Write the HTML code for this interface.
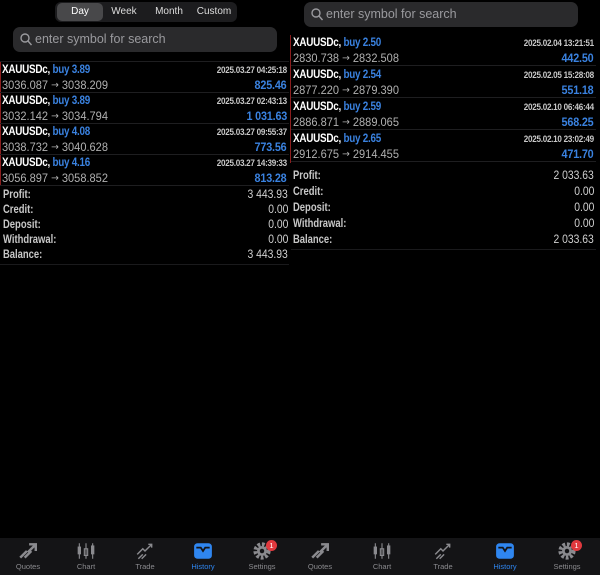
<!DOCTYPE html>
<html><head><meta charset="utf-8"><style>
*{margin:0;padding:0;box-sizing:border-box}
body{width:600px;height:575px;background:#000;position:relative;overflow:hidden;font-family:"Liberation Sans",sans-serif;color:#fff}
.a{position:absolute}
.seg{left:55px;top:2px;width:182px;height:20px;background:#1c1c1e;border-radius:6px}
.seg div{position:absolute;top:0;height:20px;line-height:20px;font-size:10px;color:#ddd;text-align:center}
.search{background:#2a2a2c;border-radius:7px;height:25px;color:#9a9a9e;font-size:12.5px;line-height:25px;padding-left:22px}
.search svg{position:absolute;left:7px;top:6px}
.row{position:absolute;height:31px;border-bottom:1px solid #1e1e20}
.l1{position:absolute;left:2px;top:2px;font-size:11.5px;font-weight:bold;letter-spacing:-0.3px;transform:scaleX(.86);transform-origin:left;white-space:nowrap}
.l1 b{color:#3a82e0}
.l2{position:absolute;left:2px;top:16px;font-size:12px;color:#b0b0b0;transform:scaleX(.92);transform-origin:left;white-space:nowrap}
.l2 u{text-decoration:none;font-family:"DejaVu Sans",sans-serif;font-size:10px;position:relative;top:-1px}
.dt{position:absolute;right:2px;top:3px;font-size:9px;font-weight:bold;color:#c8c8c8;letter-spacing:-0.3px;transform:scaleX(.9);transform-origin:right;white-space:nowrap}
.pr{position:absolute;right:2px;top:16px;font-size:12px;font-weight:bold;color:#3a82e0;letter-spacing:-0.2px;transform:scaleX(.9);transform-origin:right}
.sm{position:absolute;font-size:11.5px;color:#c8c8c8;height:15px;line-height:15px}
.sm span{position:absolute;left:0;font-weight:bold;transform:scaleX(.82);transform-origin:left}
.sm i{position:absolute;right:0;font-style:normal;color:#d0d0d0;transform:scaleX(.9);transform-origin:right}
.tab{position:absolute;top:538px;height:37px;background:#141416}
.t{position:absolute;top:0;width:50px;text-align:center;font-size:7.5px;color:#8a8a8e}
.t svg{display:block;margin:4px auto 2px}
.t.on{color:#2f86f0}
.badge{position:absolute;top:2px;left:29px;width:11px;height:11px;border-radius:6px;background:#e0393e;color:#fff;font-size:7.5px;line-height:11px;text-align:center}
</style></head><body>
<div class="a seg"><div style="left:2px;width:46px;top:1px;height:18px;line-height:18px;background:#48484a;border-radius:5px;color:#fff">Day</div><div style="left:48px;width:42px">Week</div><div style="left:92px;width:44px">Month</div><div style="left:137px;width:44px">Custom</div></div>
<div class="a search" style="left:13px;top:27px;width:264px"><svg width="12" height="13" viewBox="0 0 12 13"><circle cx="5" cy="5" r="4" stroke="#9a9a9e" stroke-width="1.4" fill="none"/><path d="M8 8l3.5 4" stroke="#9a9a9e" stroke-width="1.4"/></svg>enter symbol for search</div>
<div class="a" style="left:0;top:61px;width:289px;border-top:1px solid #1e1e20"></div>
<div class="a" style="left:0;top:62px;width:1px;height:124px;background:#8b1d1d"></div>
<div class="row" style="left:0;top:62px;width:289px"><div class="l1">XAUUSDc, <b>buy 3.89</b></div><div class="dt">2025.03.27 04:25:18</div><div class="l2">3036.087 <u>→</u> 3038.209</div><div class="pr">825.46</div></div>
<div class="row" style="left:0;top:93px;width:289px"><div class="l1">XAUUSDc, <b>buy 3.89</b></div><div class="dt">2025.03.27 02:43:13</div><div class="l2">3032.142 <u>→</u> 3034.794</div><div class="pr">1 031.63</div></div>
<div class="row" style="left:0;top:124px;width:289px"><div class="l1">XAUUSDc, <b>buy 4.08</b></div><div class="dt">2025.03.27 09:55:37</div><div class="l2">3038.732 <u>→</u> 3040.628</div><div class="pr">773.56</div></div>
<div class="row" style="left:0;top:155px;width:289px"><div class="l1">XAUUSDc, <b>buy 4.16</b></div><div class="dt">2025.03.27 14:39:33</div><div class="l2">3056.897 <u>→</u> 3058.852</div><div class="pr">813.28</div></div>
<div class="sm" style="left:3px;top:188px;width:285px"><span>Profit:</span><i>3 443.93</i></div>
<div class="sm" style="left:3px;top:203px;width:285px"><span>Credit:</span><i>0.00</i></div>
<div class="sm" style="left:3px;top:218px;width:285px"><span>Deposit:</span><i>0.00</i></div>
<div class="sm" style="left:3px;top:233px;width:285px"><span>Withdrawal:</span><i>0.00</i></div>
<div class="sm" style="left:3px;top:248px;width:285px"><span>Balance:</span><i>3 443.93</i></div>
<div class="a" style="left:0;top:264px;width:289px;border-top:1px solid #1a1a1c"></div>
<div class="a search" style="left:304px;top:2px;width:274px"><svg width="12" height="13" viewBox="0 0 12 13"><circle cx="5" cy="5" r="4" stroke="#9a9a9e" stroke-width="1.4" fill="none"/><path d="M8 8l3.5 4" stroke="#9a9a9e" stroke-width="1.4"/></svg>enter symbol for search</div>
<div class="a" style="left:290px;top:35px;width:1px;height:128px;background:#8b1d1d"></div>
<div class="row" style="left:291px;top:35px;width:305px"><div class="l1">XAUUSDc, <b>buy 2.50</b></div><div class="dt">2025.02.04 13:21:51</div><div class="l2">2830.738 <u>→</u> 2832.508</div><div class="pr">442.50</div></div>
<div class="row" style="left:291px;top:67px;width:305px"><div class="l1">XAUUSDc, <b>buy 2.54</b></div><div class="dt">2025.02.05 15:28:08</div><div class="l2">2877.220 <u>→</u> 2879.390</div><div class="pr">551.18</div></div>
<div class="row" style="left:291px;top:99px;width:305px"><div class="l1">XAUUSDc, <b>buy 2.59</b></div><div class="dt">2025.02.10 06:46:44</div><div class="l2">2886.871 <u>→</u> 2889.065</div><div class="pr">568.25</div></div>
<div class="row" style="left:291px;top:131px;width:305px"><div class="l1">XAUUSDc, <b>buy 2.65</b></div><div class="dt">2025.02.10 23:02:49</div><div class="l2">2912.675 <u>→</u> 2914.455</div><div class="pr">471.70</div></div>
<div class="sm" style="left:293px;top:168px;width:301px;height:16px;line-height:16px"><span>Profit:</span><i>2 033.63</i></div>
<div class="sm" style="left:293px;top:184px;width:301px;height:16px;line-height:16px"><span>Credit:</span><i>0.00</i></div>
<div class="sm" style="left:293px;top:200px;width:301px;height:16px;line-height:16px"><span>Deposit:</span><i>0.00</i></div>
<div class="sm" style="left:293px;top:216px;width:301px;height:16px;line-height:16px"><span>Withdrawal:</span><i>0.00</i></div>
<div class="sm" style="left:293px;top:232px;width:301px;height:16px;line-height:16px"><span>Balance:</span><i>2 033.63</i></div>
<div class="a" style="left:291px;top:249px;width:305px;border-top:1px solid #1a1a1c"></div>
<div class="tab" style="left:0;width:600px"></div>
<div class="a" style="left:0;top:538px;width:600px;height:37px">
<div class="t" style="left:3px"><svg width="20" height="18" viewBox="0 0 18 16"><path d="M2 14l6-6M6 14l6-6M10 2h6v6M16 2L9 9" stroke="#8a8a8e" stroke-width="2.2" fill="none"/></svg>Quotes</div>
<div class="t" style="left:61px"><svg width="20" height="18" viewBox="0 0 18 16"><path d="M3 1v14M9 1v14M15 1v14" stroke="#8a8a8e" stroke-width="1"/><rect x="1.5" y="4" width="3" height="7" fill="#8a8a8e"/><rect x="7.5" y="6" width="3" height="6" fill="none" stroke="#8a8a8e"/><rect x="13.5" y="3" width="3" height="8" fill="#8a8a8e"/></svg>Chart</div>
<div class="t" style="left:120px"><svg width="20" height="18" viewBox="0 0 18 16"><path d="M2 11l5-5 2 2 6-6M12 2h3v3M3 15l4-4M6 15l4-4" stroke="#8a8a8e" stroke-width="1.3" fill="none"/></svg>Trade</div>
<div class="t on" style="left:178px"><svg width="20" height="18" viewBox="0 0 18 16"><rect x="1" y="1" width="16" height="14" rx="3" fill="#2f86f0"/><path d="M3 5h4l2 3 2-3h4" stroke="#141416" stroke-width="1.6" fill="none"/></svg>History</div>
<div class="t" style="left:237px"><svg width="20" height="18" viewBox="0 0 18 16"><circle cx="9" cy="8" r="6" stroke="#8a8a8e" stroke-width="3.5" stroke-dasharray="2.5 1.5" fill="none"/><circle cx="9" cy="8" r="4.5" fill="#8a8a8e"/><circle cx="9" cy="8" r="2" fill="#141416"/></svg>Settings<div class="badge">1</div></div>
<div class="t" style="left:295px"><svg width="20" height="18" viewBox="0 0 18 16"><path d="M2 14l6-6M6 14l6-6M10 2h6v6M16 2L9 9" stroke="#8a8a8e" stroke-width="2.2" fill="none"/></svg>Quotes</div>
<div class="t" style="left:357px"><svg width="20" height="18" viewBox="0 0 18 16"><path d="M3 1v14M9 1v14M15 1v14" stroke="#8a8a8e" stroke-width="1"/><rect x="1.5" y="4" width="3" height="7" fill="#8a8a8e"/><rect x="7.5" y="6" width="3" height="6" fill="none" stroke="#8a8a8e"/><rect x="13.5" y="3" width="3" height="8" fill="#8a8a8e"/></svg>Chart</div>
<div class="t" style="left:418px"><svg width="20" height="18" viewBox="0 0 18 16"><path d="M2 11l5-5 2 2 6-6M12 2h3v3M3 15l4-4M6 15l4-4" stroke="#8a8a8e" stroke-width="1.3" fill="none"/></svg>Trade</div>
<div class="t on" style="left:480px"><svg width="20" height="18" viewBox="0 0 18 16"><rect x="1" y="1" width="16" height="14" rx="3" fill="#2f86f0"/><path d="M3 5h4l2 3 2-3h4" stroke="#141416" stroke-width="1.6" fill="none"/></svg>History</div>
<div class="t" style="left:542px"><svg width="20" height="18" viewBox="0 0 18 16"><circle cx="9" cy="8" r="6" stroke="#8a8a8e" stroke-width="3.5" stroke-dasharray="2.5 1.5" fill="none"/><circle cx="9" cy="8" r="4.5" fill="#8a8a8e"/><circle cx="9" cy="8" r="2" fill="#141416"/></svg>Settings<div class="badge">1</div></div>
</div>
</body></html>
